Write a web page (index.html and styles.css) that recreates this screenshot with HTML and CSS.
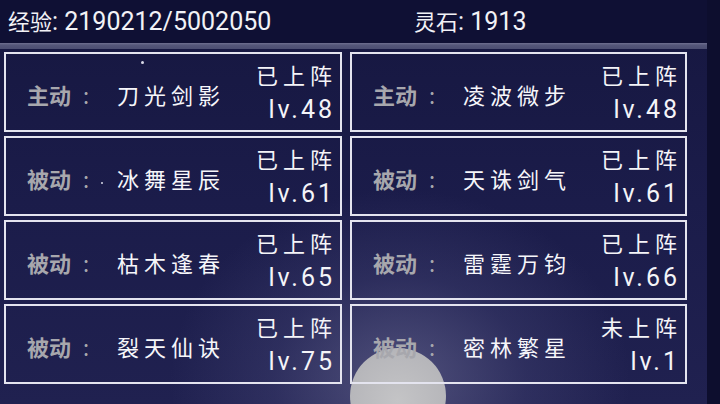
FILE: index.html
```html
<!DOCTYPE html>
<html>
<head>
<meta charset="utf-8">
<link rel="stylesheet" href="styles.css">
</head>
<body>
<div class="app">
  <div class="glow"></div>
  <div class="moon"></div>
  <header class="top">
    <span class="stat exp"><span class="cn">经验</span>: 2190212/5002050</span>
    <span class="stat stone"><span class="cn">灵石</span>: 1913</span>
  </header>
  <div class="band"></div>
  <main class="grid">
    <div class="card"><span class="type">主动<span class="colon">:</span></span><span class="name">刀光剑影</span><span class="side"><span class="state">已上阵</span><span class="lv">lv.48</span></span></div>
    <div class="card"><span class="type">主动<span class="colon">:</span></span><span class="name">凌波微步</span><span class="side"><span class="state">已上阵</span><span class="lv">lv.48</span></span></div>
    <div class="card"><span class="type">被动<span class="colon">:</span></span><span class="name">冰舞星辰</span><span class="side"><span class="state">已上阵</span><span class="lv">lv.61</span></span></div>
    <div class="card"><span class="type">被动<span class="colon">:</span></span><span class="name">天诛剑气</span><span class="side"><span class="state">已上阵</span><span class="lv">lv.61</span></span></div>
    <div class="card"><span class="type">被动<span class="colon">:</span></span><span class="name">枯木逢春</span><span class="side"><span class="state">已上阵</span><span class="lv">lv.65</span></span></div>
    <div class="card"><span class="type">被动<span class="colon">:</span></span><span class="name">雷霆万钧</span><span class="side"><span class="state">已上阵</span><span class="lv">lv.66</span></span></div>
    <div class="card"><span class="type">被动<span class="colon">:</span></span><span class="name">裂天仙诀</span><span class="side"><span class="state">已上阵</span><span class="lv">lv.75</span></span></div>
    <div class="card"><span class="type">被动<span class="colon">:</span></span><span class="name">密林繁星</span><span class="side"><span class="state">未上阵</span><span class="lv">lv.1</span></span></div>
  </main>
  <span class="star s1"></span>
  <span class="star s2"></span>
</div>
</body>
</html>
```

FILE: styles.css
```css
html, body {
  margin: 0;
  padding: 0;
}
body {
  width: 720px;
  height: 404px;
  overflow: hidden;
  background: #0d0e2e;
  font-family: Roboto, "Noto Sans CJK SC", sans-serif;
  color: #f4f4f8;
}
.app {
  position: relative;
  width: 707px;
  height: 404px;
  overflow: hidden;
  background: linear-gradient(180deg, #161740 0%, #1b1c4a 50%, #202150 100%);
}
.glow {
  position: absolute;
  left: 170px;
  top: 190px;
  width: 460px;
  height: 380px;
  border-radius: 50%;
  background: radial-gradient(closest-side, rgba(120,120,160,0.55), rgba(90,90,140,0.25) 55%, rgba(40,40,90,0) 100%);
}
.moon {
  position: absolute;
  left: 350px;
  top: 348px;
  width: 96px;
  height: 96px;
  border-radius: 50%;
  background: radial-gradient(circle at 50% 55%, #c4c4c6, #b6b6ba 70%, #adadb3);
}
.top {
  position: relative;
  height: 43px;
  background: #0f1034;
  display: flex;
  align-items: center;
  font-size: 25px;
  color: #f2f2f6;
  padding-bottom: 3px;
  box-sizing: border-box;
}
.stat .cn {
  font-family: "Noto Sans CJK SC", sans-serif;
  font-size: 22px;
}
.exp {
  margin-left: 8px;
  width: 406px;
}
.band {
  position: relative;
  height: 6px;
  background: linear-gradient(180deg, #6f7090 0%, #55577a 35%, #4c4e72 100%);
}
.grid {
  position: relative;
  display: grid;
  grid-template-columns: 338px 337px;
  grid-auto-rows: 80px;
  column-gap: 8px;
  row-gap: 4px;
  padding: 3px 0 0 4px;
}
.card {
  border: 2px solid #e4e4ef;
  display: flex;
  align-items: center;
  padding: 0 8px 0 21px;
  box-sizing: border-box;
  font-family: "Noto Sans CJK SC", sans-serif;
}
.type {
  width: 90px;
  font-size: 22px;
  font-weight: 700;
  color: #a7a7ad;
  letter-spacing: 0;
  margin-top: 4px;
}
.colon {
  margin-left: 12px;
  font-weight: 400;
}
.name {
  font-size: 22px;
  letter-spacing: 5px;
  color: #f6f6fa;
  margin-top: 4px;
}
.side {
  margin-left: auto;
  display: flex;
  flex-direction: column;
  align-items: flex-end;
  margin-top: 2px;
}
.state {
  font-size: 22px;
  letter-spacing: 5px;
  margin-right: -5px;
  line-height: 34px;
}
.lv {
  font-family: Roboto, sans-serif;
  font-size: 25px;
  letter-spacing: 3px;
  margin-right: -3px;
  line-height: 38px;
}
.star {
  position: absolute;
  width: 3px;
  height: 3px;
  border-radius: 50%;
  background: #d8d8e6;
}
.s1 { left: 141px; top: 61px; }
.s2 { left: 101px; top: 182px; width: 2px; height: 2px; }
```
